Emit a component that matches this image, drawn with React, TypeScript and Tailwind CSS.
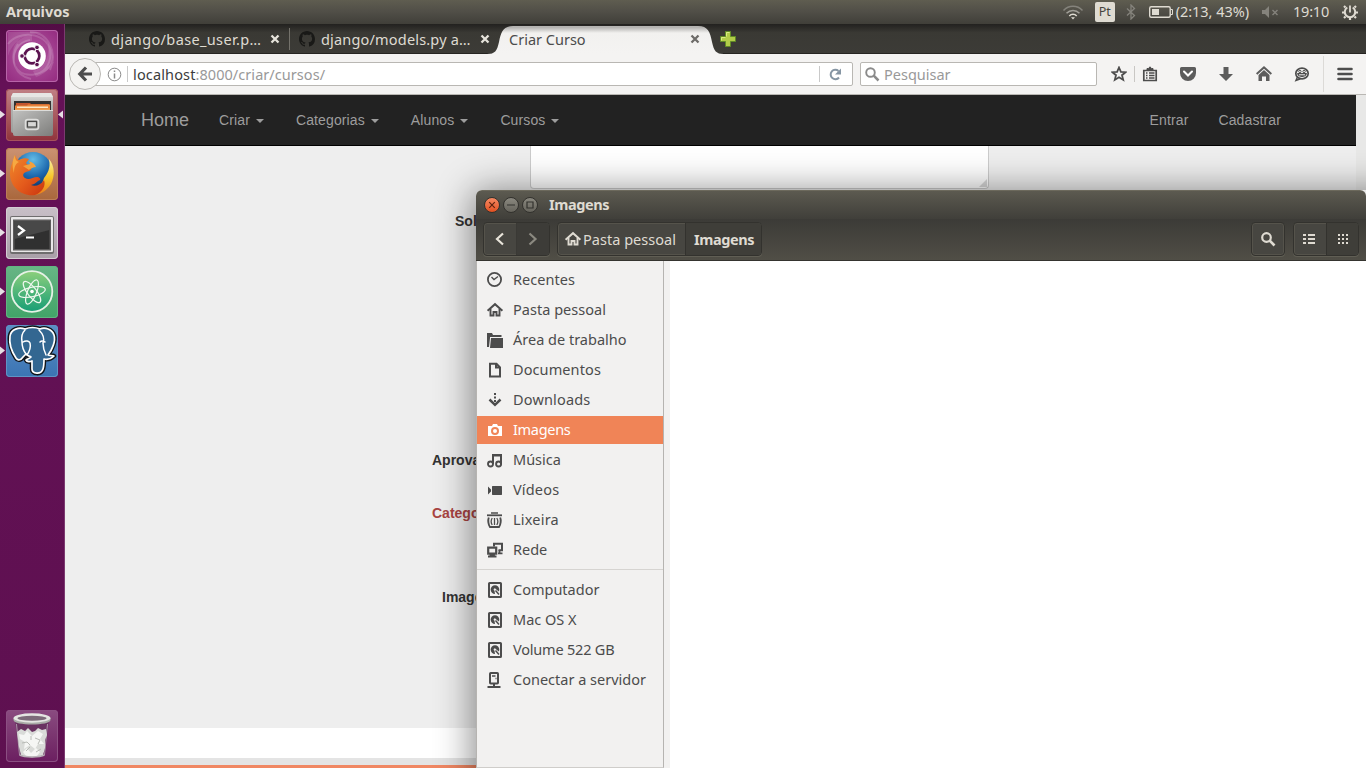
import React from "react";

/* ---------- Launcher tiles ---------- */

function Tile({ bg, running, active, children }: { bg: string; running?: boolean; active?: boolean; children: React.ReactNode }) {
  return (
    <div className="relative flex h-[52px] w-full justify-center">
      {running && (
        <svg className="absolute top-[19px] left-0" width="6" height="12">
          <path d="M0 2.500 5 6.500 0 10.500z" fill="#e6dfe4" />
        </svg>
      )}
      {active && (
        <svg className="absolute top-[19px] right-0" width="6" height="12">
          <path d="M5 2.500 0 6.500 5 10.500z" fill="#e6dfe4" />
        </svg>
      )}
      <div className={`h-[52px] w-[52px] overflow-hidden rounded-[4px] ${bg}`}>
        <svg width="52" height="52" viewBox="0 0 52 52">{children}</svg>
      </div>
    </div>
  );
}

function UbuntuLogo() {
  return (
    <>
      <path d="M2 14C12 0 40 2 44 20c2 12-4 21-13 24M47 32C40 46 16 50 9 36 4 24 12 12 24 10M24 2c18 0 28 20 20 38M25 49C10 46 2 30 12 14" fill="none" stroke="#fff" strokeOpacity=".16" strokeWidth="2" />
      <path d="M26 5C7 6 3 24 9 37 7 20 14 11 26 11zM30 47c17-5 21-22 12-34 2 15-4 25-15 28zM2 2h34C18 4 6 12 2 26z" fill="#fff" opacity=".12" />
      <circle cx="26" cy="26" r="13.800" fill="#fff" />
      <circle cx="26" cy="26" r="7.300" fill="none" stroke="#5b1350" strokeWidth="2.800" />
      <path d="M26 26 14 26M26 26l6.500-11M26 26l6.500 11" stroke="#fff" strokeWidth="1.200" />
      <circle cx="26" cy="26" r="5.500" fill="#fff" />
      {[[16, 26], [31, 17.4], [31, 34.6]].map(([x, y]) => (
        <circle key={y} cx={x} cy={y} r="2.300" fill="#5b1350" stroke="#fff" strokeWidth=".9" />
      ))}
    </>
  );
}

function FilesLogo() {
  return (
    <>
      <defs>
        <linearGradient id="cab" x1="0" y1="0" x2="1" y2="1">
          <stop offset="0" stopColor="#c2c2c0" />
          <stop offset="1" stopColor="#7d7d7b" />
        </linearGradient>
        <linearGradient id="cabTop" x1="0" y1="0" x2="0" y2="1">
          <stop offset="0" stopColor="#e4e4e2" />
          <stop offset=".3" stopColor="#b5b5b3" />
          <stop offset="1" stopColor="#9d9d9b" />
        </linearGradient>
      </defs>
      <path d="M7 4h38l2 4v34a2 2 0 0 1-2 2H7a2 2 0 0 1-2-2V8z" fill="url(#cabTop)" />
      <path d="M7 4h38l2 4H5z" fill="#e6e6e4" />
      <rect x="8" y="12" width="37" height="10" fill="#33312f" />
      <path d="M10 14h14l1 1h18v7H10z" fill="#c4562f" />
      <path d="M9 16.500h12l1-1h22V22H9z" fill="#e8853a" />
      <rect x="11" y="17.500" width="31" height="1.500" fill="#fde9c4" />
      <path d="M9 19.500h35v2H9z" fill="#f0a050" />
      <path d="M7 21h40v24a2 2 0 0 1-2 2H9a2 2 0 0 1-2-2z" fill="url(#cab)" />
      <path d="M7 21.500h40" stroke="#dcdcda" />
      <rect x="19.500" y="30.500" width="13" height="10" rx="2.500" fill="#a5a5a3" stroke="#dededc" strokeWidth="1.600" />
      <rect x="21.500" y="32.500" width="9" height="5.500" fill="#d8d8d6" stroke="#4b4b49" strokeWidth="1.200" />
    </>
  );
}

function FirefoxLogo() {
  return (
    <>
      <defs>
        <radialGradient id="globe" cx=".5" cy=".2" r=".8">
          <stop offset="0" stopColor="#62bbe6" />
          <stop offset=".55" stopColor="#1c68ad" />
          <stop offset="1" stopColor="#0b2c5f" />
        </radialGradient>
        <linearGradient id="fox" x1="0" y1="0" x2="1" y2="1">
          <stop offset="0" stopColor="#f08a2c" />
          <stop offset=".55" stopColor="#e45b1c" />
          <stop offset="1" stopColor="#c9350f" />
        </linearGradient>
        <linearGradient id="tail" x1="0" y1="0" x2="0" y2="1">
          <stop offset="0" stopColor="#f8efa0" />
          <stop offset=".5" stopColor="#f7c629" />
          <stop offset="1" stopColor="#ea7a1b" />
        </linearGradient>
      </defs>
      <circle cx="27" cy="23" r="19" fill="url(#globe)" />
      <path d="M43 11c6 7 6 17 2 25-5 8-12 11-19 11 6-4 10-10 12-17 3-4 7-9 5-19z" fill="url(#tail)" />
      <path d="M9 7c1 3 2 4 4 5 4-2 7-2 10-1l-3 4 5 5c1 2-1 3-5 4-3 1-4 4-1 6 4 3 8-1 12-1 2 0 4 2 3 3-3 1-4 4-9 5 4 2 10 0 13-5 2 5-1 12-9 15C16 49 4 39 4 26c0-8 3-12 5-19z" fill="url(#fox)" />
      <path d="M9 7c0 4 1 6 4 7-4 2-5 6-5 11-2-7-2-12 1-18z" fill="#f7a941" />
      <path d="M17 18l7-2-1-3c3 1 6 3 7 6-3 0-6 2-7 3z" fill="#f3a03d" />
    </>
  );
}

function TerminalLogo() {
  return (
    <>
      <rect x="4" y="9" width="44" height="38" rx="2" fill="#6f6d6e" />
      <rect x="5" y="10" width="42" height="35" rx="1" fill="#e9e7e8" />
      <rect x="7" y="12.500" width="38" height="31" fill="#5c5b5b" />
      <rect x="8.500" y="14" width="35" height="28" fill="#303030" />
      <path d="M8.500 14h35v9l-35 9z" fill="#484848" />
      <path d="M12 19l6 4.500-6 4.500" fill="none" stroke="#fff" strokeWidth="2.200" />
      <path d="M20 30.500h8" stroke="#fff" strokeWidth="2" />
    </>
  );
}

function AtomLogo() {
  return (
    <>
      <defs>
        <linearGradient id="atom" x1="0" y1="0" x2="0" y2="1">
          <stop offset="0" stopColor="#8ccf7c" />
          <stop offset="1" stopColor="#179e76" />
        </linearGradient>
      </defs>
      <circle cx="26" cy="25.500" r="20.300" fill="url(#atom)" stroke="#e6f2e6" strokeWidth="1.800" />
      <g fill="none" stroke="#eef7ee" strokeWidth="1.200">
        <ellipse cx="26" cy="26" rx="13.500" ry="4.800" transform="rotate(-12 26 26)" />
        <ellipse cx="26" cy="26" rx="13" ry="4.500" transform="rotate(52 26 26)" />
        <ellipse cx="26" cy="26" rx="13" ry="4.500" transform="rotate(-68 26 26)" />
      </g>
      <circle cx="26" cy="25.500" r="1.800" fill="#fff" />
    </>
  );
}

function PostgresLogo() {
  const shape =
    "M19 4c-6-2-14 0-15 7-1 7 2 16 6 22 2 3 5 2 7-1l3-3c2 2 3 2 5 3-2 2-4 2-5 3 1 2 4 2 6 1v8c0 5 9 6 11 0 1-3 1-7 1-10 4 1 8-1 10-3-1-1-5 0-6-1 4-5 8-14 6-20-2-6-9-8-14-6-5-2-10-2-15 0z";
  return (
    <>
      <path d={shape} fill="#336791" stroke="#101418" strokeWidth="4.500" strokeLinejoin="round" />
      <path d={shape} fill="#336791" stroke="#fff" strokeWidth="1.700" strokeLinejoin="round" />
      <path d="M19 5c-3 3-4 7-3 12 0 5 1 8 4 12M33 5c4 4 6 8 4 13 0 5 1 8 3 12M17 17c3-2 6-1 7 1 1 4-1 9-3 12M34 17c2-2 3-1 5 0" fill="none" stroke="#fff" strokeWidth="1.500" strokeLinecap="round" />
    </>
  );
}

function TrashLogo() {
  return (
    <>
      <path d="M9 10h34l-4 35c-3 3-23 3-26 0z" fill="#5f2f58" opacity=".7" />
      <path d="M10.500 14l3 31M41.500 14l-3 31" stroke="#cbbfca" strokeWidth="1" opacity=".7" />
      <path d="M11 22l4-3 4 2 3-3 4 4 3-1 3-3 4 2 4-1 1 6-2 5v8l-2 7c-5 3-17 3-22 0l-2-8-1-8z" fill="#d9dbd8" />
      <path d="M13 24l5 1 3-4 5 5 6-5 5 3-3 5 4 5-6 0-3 5-5-4-6 4 1-7-5-3zM17 42l4-4 4 5 5-5 4 4-3 4H20z" fill="#f5f6f4" />
      <path d="M16 33l5-1 3 3M29 28l5 2-2 4M20 41l4-4M30 42l5-3M25 26v4" stroke="#b8bbb6" fill="none" />
      <path d="M13.500 45c5 2.500 20 2.500 25 0" stroke="#b9b3b8" strokeWidth="1.500" fill="none" />
      <path d="M7.500 8v2c0 6 37 6 37 0V8z" fill="#a9aca7" />
      <ellipse cx="26" cy="8" rx="18.500" ry="4.700" fill="#e4e6e2" />
      <ellipse cx="26" cy="8.200" rx="14.500" ry="2.500" fill="#7c6b79" />
    </>
  );
}

/* ---------- Top panel ---------- */

function TopPanel() {
  return (
    <header className="flex h-6 shrink-0 items-center bg-linear-to-b from-[#5f5d50] via-[#504e47] to-[#403f39] pr-[7px] pl-[6px] text-[14.5px] leading-[22px] text-[#dfdbd2]">
      <span className="h-6 flex-1 font-bold tracking-[-0.05px]">Arquivos</span>
      <svg width="22" height="16" viewBox="0 0 22 16" fill="none">
        <path d="M1.500 6.500a13 13 0 0 1 19 0" stroke="#85837c" strokeWidth="1.500" />
        <path d="M4.500 9.300a9 9 0 0 1 13 0" stroke="#a19f98" strokeWidth="1.500" />
        <path d="M7.300 12a5 5 0 0 1 7.400 0" stroke="#dfdbd2" strokeWidth="1.500" />
        <path d="M9 13.200h4l-2 2.300z" fill="#dfdbd2" />
      </svg>
      <span className="ml-[11px] h-5 w-5 rounded-[2px] bg-[#dfdbd2] text-center text-[12.5px] leading-5 text-[#45443e]">Pt</span>
      <svg className="ml-[10px]" width="12" height="16" viewBox="0 0 12 16" fill="none" stroke="#85837c" strokeWidth="1.300">
        <path d="M2 4.500 9.500 11.500 6 15V1l3.500 3.500L2 11.500" />
      </svg>
      <svg className="ml-[11px]" width="26" height="14" viewBox="0 0 26 14" fill="none">
        <rect x="1.700" y="1.700" width="20.500" height="10.500" rx="1.500" stroke="#dfdbd2" strokeWidth="1.400" />
        <rect x="4" y="4" width="7" height="6" fill="#dfdbd2" />
        <path d="M22.500 4.500h2v5h-2" stroke="#dfdbd2" />
      </svg>
      <span className="ml-[2px] h-6 tracking-[-0.05px]">(2:13, 43%)</span>
      <svg className="ml-[12px]" width="19" height="14" viewBox="0 0 19 14">
        <path d="M1 5h3l4-4v12L4 9H1z" fill="#85837c" />
        <path d="M11.500 5l5 5m0-5-5 5" stroke="#85837c" strokeWidth="1.400" />
      </svg>
      <span className="ml-[13px] h-6 tracking-[-0.2px]">19:10</span>
      <svg className="ml-[12px]" width="18" height="18" viewBox="0 0 18 18" fill="none" stroke="#dfdbd2">
        <path d="M6.300 4.500a5.200 5.200 0 1 0 5.400 0" strokeWidth="2" />
        <path d="M9 2.500v7" strokeWidth="1.800" />
        <path d="M1 9.500h3M14 9.500h3M9 14v3M4.500 4.500l-1.500-1.500M13.500 4.500l1.500-1.500M4.500 13.500 3 15M13.500 13.500 15 15" strokeWidth="2.200" />
      </svg>
    </header>
  );
}

/* ---------- Browser ---------- */

const octocat =
  "M8 0C3.580 0 0 3.580 0 8c0 3.540 2.290 6.530 5.470 7.590.4.070.550-.17.550-.380 0-.190-.010-.820-.010-1.490-2.010.370-2.530-.490-2.690-.940-.090-.230-.480-.940-.820-1.130-.280-.150-.680-.520-.010-.530.630-.010 1.080.580 1.230.820.720 1.210 1.870.870 2.330.660.070-.520.280-.870.510-1.070-1.780-.200-3.640-.890-3.640-3.950 0-.870.310-1.590.820-2.150-.080-.200-.360-1.020.080-2.120 0 0 .670-.210 2.200.820.640-.180 1.320-.270 2-.270s1.360.090 2 .270c1.530-1.040 2.200-.820 2.200-.820.440 1.100.160 1.920.080 2.120.510.560.820 1.270.820 2.150 0 3.070-1.870 3.750-3.650 3.950.290.250.540.730.540 1.480 0 1.070-.010 1.930-.010 2.200 0 .210.150.460.550.380A8.010 8.010 0 0 0 16 8c0-4.420-3.580-8-8-8z";

function CloseX({ color }: { color: string }) {
  return (
    <svg width="10" height="10" viewBox="0 0 10 10">
      <path d="M1.500 1.500l7 7m0-7-7 7" stroke={color} strokeWidth="2.300" />
    </svg>
  );
}

function TabStrip() {
  return (
    <div className="flex h-[30px] shrink-0 items-center border-b border-[#262522] bg-linear-to-b from-[#22211f] from-0% via-[#3a3934] via-30% to-[#3c3b37] pl-6 text-[14.5px] leading-[30px] text-[#dfdbd2]">
      <svg width="16" height="16" viewBox="0 0 16 16" fill="#191917"><path d={octocat} /></svg>
      <span className="ml-[6px] w-[159px] whitespace-nowrap tracking-[0.36px]">django/base_user.p…</span>
      <CloseX color="#e6e3db" />
      <span className="ml-[9px] h-[22px] w-px bg-[#74726b]" />
      <svg className="ml-[9px]" width="16" height="16" viewBox="0 0 16 16" fill="#191917"><path d={octocat} /></svg>
      <span className="ml-[6px] w-[159px] whitespace-nowrap tracking-[0.18px]">django/models.py a…</span>
      <CloseX color="#e6e3db" />
      <div className="relative -mb-px ml-[-3px] h-[30px] w-[238px]">
        <svg className="absolute inset-0" width="238" height="30" viewBox="0 0 238 30">
          <defs>
            <linearGradient id="tab" x1="0" y1="0" x2="0" y2="1">
              <stop offset="0.050" stopColor="#b5b4b2" />
              <stop offset=".25" stopColor="#f2f1ef" />
              <stop offset="1" stopColor="#f4f3f2" />
            </linearGradient>
          </defs>
          <path d="M0 30c8 0 10-3 12-12 2-10 4-16 14-16h185c10 0 12 6 14 16 2 9 4 12 12 12z" fill="url(#tab)" />
        </svg>
        <div className="relative flex h-[30px] items-center pr-[25px] pl-[22px] text-[#4c4c4c]">
          <span className="flex-1 leading-[30px]">Criar Curso</span>
          <CloseX color="#6d6b68" />
        </div>
      </div>
      <svg className="-ml-[6px]" width="18" height="18" viewBox="0 0 18 18">
        <path d="M6.500 1.500h5v5h5v5h-5v5h-5v-5h-5v-5h5z" fill="#b2cc49" stroke="#608a26" />
        <path d="M7.500 6.500v-4h3M2.500 10.500v-3h4" fill="none" stroke="#dbeb84" />
      </svg>
    </div>
  );
}

function Toolbar() {
  return (
    <div className="flex h-[41px] shrink-0 items-center border-b border-[#b9b7b3] bg-[#f4f3f2] pl-1 text-[14.5px]">
      <div className="z-10 flex h-8 w-8 items-center justify-center rounded-full border border-[#b9b7b3] bg-[#f4f3f1]">
        <svg width="16" height="16" viewBox="0 0 16 16" fill="none" stroke="#4d4d4d" strokeWidth="3.200">
          <path d="M9 1.500 2.800 8 9 14.500M3 8h12" />
        </svg>
      </div>
      <div className="-ml-[6px] flex h-6 w-[758px] items-center rounded-r-[2px] border border-[#b9b7b3] bg-white pl-[11px]">
        <svg width="15" height="15" viewBox="0 0 15 15" fill="none" stroke="#8a8a8a">
          <circle cx="7.500" cy="7.500" r="6.300" />
          <path d="M7.500 6.500v5M7.500 3.500v1.600" strokeWidth="1.500" />
        </svg>
        <span className="ml-[5px] h-4 w-px bg-[#c9c9c9]" />
        <span className="ml-[5px] flex-1 leading-[22px] tracking-[0.05px] text-[#999]">
          <span className="tracking-[0.14px] text-[#3c3c3c]">localhost</span>:8000/criar/cursos/
        </span>
        <span className="h-4 w-px bg-[#c9c9c9]" />
        <svg className="mr-[10px] ml-[9px]" width="13" height="13" viewBox="0 0 13 13" fill="none">
          <path d="M10 9.500A4.700 4.700 0 1 1 9.500 3" stroke="#8595a3" strokeWidth="2" />
          <path d="M12 .5v6H6z" fill="#8595a3" />
        </svg>
      </div>
      <div className="ml-[7px] flex h-6 w-[237px] items-center rounded-[2px] border border-[#b9b7b3] bg-white pl-1 text-[#999]">
        <svg width="15" height="15" viewBox="0 0 15 15" fill="none" stroke="#8a8a8a">
          <circle cx="5.500" cy="5.500" r="4.300" strokeWidth="1.900" />
          <path d="M8.700 8.700l4.800 4.800" strokeWidth="2.500" />
        </svg>
        <span className="ml-[4px] leading-[22px]">Pesquisar</span>
      </div>
      <svg className="ml-[14px]" width="16" height="16" viewBox="0 0 16 16" fill="none" stroke="#4d4d4d" strokeWidth="1.800">
        <path d="M8 1.500l1.900 4.300 4.700.4-3.600 3 1.200 4.700L8 11.300l-4.200 2.600L5 9.200l-3.600-3 4.700-.4z" />
      </svg>
      <span className="ml-[7px] h-4 w-px bg-[#c9c7c4]" />
      <svg className="ml-[7px]" width="16" height="16" viewBox="0 0 16 16" fill="none" stroke="#4d4d4d">
        <path d="M1.800 4.500h12.400v10H1.800z" strokeWidth="1.700" />
        <path d="M5 4V2.500h1.500L8 .8l1.500 1.700H11V4z" fill="#4d4d4d" />
        <path d="M4 7h1.500M4 9.500h1.500M4 12h1.500M7 7h5.500M7 9.500h5.500M7 12h5.500" strokeWidth="1.300" />
      </svg>
      <svg className="ml-[21px]" width="18" height="16" viewBox="0 0 18 16">
        <path d="M2.500 1h13A1.500 1.500 0 0 1 17 2.500V7A8 8 0 0 1 1 7V2.500A1.500 1.500 0 0 1 2.500 1z" fill="#5c5c5c" />
        <path d="M5 5.500l4 4 4-4" fill="none" stroke="#fff" strokeWidth="2" strokeLinecap="round" />
      </svg>
      <svg className="ml-[21px]" width="16" height="16" viewBox="0 0 16 16">
        <path d="M5.500 1h5v7H15l-7 7-7-7h4.500z" fill="#5c5c5c" />
      </svg>
      <svg className="ml-[22px]" width="16" height="16" viewBox="0 0 16 16">
        <path d="M8 0l8 7.300-1.300 1.400L8 2.700 1.300 8.700 0 7.300z" fill="#5c5c5c" />
        <path d="M2.500 9 8 4l5.500 5v6H10v-4.500H6V15H2.500z" fill="#5c5c5c" />
      </svg>
      <svg className="ml-[22px]" width="16" height="16" viewBox="0 0 16 16" fill="none" stroke="#4d4d4d">
        <ellipse cx="8" cy="7.500" rx="6.200" ry="5.300" strokeWidth="1.700" />
        <path d="M3.500 11 2 14.500l4.500-1.800" strokeWidth="1.500" />
        <path d="M3.500 7.500C4 11.500 12 11.500 12.500 7.500z" fill="#4d4d4d" />
        <circle cx="5.900" cy="5.500" r="1.200" />
        <circle cx="10.100" cy="5.500" r="1.200" />
        <path d="M5 8.800h6" stroke="#eee" />
      </svg>
      <span className="ml-[13px] h-9 w-px bg-[#dcdad7]" />
      <svg className="ml-[13px]" width="16" height="14" viewBox="0 0 16 14" stroke="#4d4d4d" strokeWidth="2.600" strokeLinecap="round">
        <path d="M1.500 2h13M1.500 7h13M1.500 12h13" />
      </svg>
    </div>
  );
}

function NavMenu({ label }: { label: string }) {
  return (
    <span className="flex items-center pr-[17px] pl-[15px] tracking-[0.12px]">
      {label}
      <span className="mt-[2px] ml-[6px] border-x-4 border-t-4 border-x-transparent border-t-[#9d9d9d]" />
    </span>
  );
}

function Browser() {
  return (
    <section className="flex min-w-0 flex-1 flex-col">
      <TabStrip />
      <Toolbar />
      <div className="flex min-h-0 flex-1">
        <div className="flex flex-1 flex-col font-['Liberation_Sans',sans-serif]">
          <nav className="flex h-[51px] shrink-0 border-b border-black bg-[#222] pr-[60px] pl-[61px] text-[14px] leading-[50px] text-[#9d9d9d]">
            <span className="px-[15px] text-[18px]">Home</span>
            <div className="flex flex-1">
              <NavMenu label="Criar" />
              <NavMenu label="Categorias" />
              <NavMenu label="Alunos" />
              <NavMenu label="Cursos" />
            </div>
            <span className="px-[15px] tracking-[0.12px]">Entrar</span>
            <span className="px-[15px] tracking-[0.12px]">Cadastrar</span>
          </nav>
          <main className="flex h-[582px] flex-col bg-[#eee] text-[14px] leading-5 font-bold text-[#333]">
            <div className="relative ml-[465px] h-[43px] w-[459px] rounded-b-[4px] border border-t-0 border-[#ccc] bg-white">
              <svg className="absolute right-px bottom-px" width="8" height="8" fill="#c9c9c9" opacity=".7"><path d="M0 8 8 0V8z" /></svg>
            </div>
            <div className="mt-[22px] pl-[390px]">Sol</div>
            <div className="mt-[219px] pl-[367px]">Aprova</div>
            <div className="mt-[33px] pl-[367px] text-[#a94442]">Catego</div>
            <div className="mt-[64px] pl-[377px]">Image</div>
          </main>
          <div className="h-[30px] shrink-0 bg-white" />
          <div className="h-[7px] shrink-0 bg-[#e4e4e4]" />
          <div className="h-[3px] shrink-0 bg-[#f08763]" />
        </div>
        <div className="w-[10px] shrink-0 bg-[#e8e8e7]" />
      </div>
    </section>
  );
}

/* ---------- File manager ---------- */

const icons: Record<string, React.ReactNode> = {
  clock: (
    <>
      <circle cx="7.500" cy="7.500" r="6.600" fill="none" strokeWidth="1.800" />
      <path d="M4.500 5 7 7.500 11 4.500" fill="none" strokeWidth="1.400" />
    </>
  ),
  home: (
    <>
      <path d="M.6 8.700 8 2.200l7.400 6.500" fill="none" strokeWidth="2" />
      <path d="M3.500 7v6.500h3V10h3v3.500h3V7" fill="none" strokeWidth="1.900" />
    </>
  ),
  folder: (
    <path d="M0 1h5l1 2h8.500v2H3v1l-1 9H0zM4 6h12v10H3z" fill="currentColor" stroke="none" />
  ),
  doc: <path d="M3 1.800h6.500L13 5.300v9.200H3zM9 2v3.500h3.500" fill="none" strokeWidth="2" />,
  download: (
    <>
      <path d="M8 1v9" strokeWidth="2" strokeDasharray="2 1.500" />
      <path d="M2.500 7.500 8 12.800 13.500 7.500" fill="none" strokeWidth="2.500" />
    </>
  ),
  camera: (
    <>
      <path d="M1 4h4l1-2h4l1 2h4v10H1z" fill="currentColor" stroke="none" />
      <circle cx="8" cy="9" r="3" fill="none" stroke="#f08457" strokeWidth="2" />
    </>
  ),
  music: (
    <>
      <path d="M6 12V3h8v9M6 3.500h8" fill="none" strokeWidth="2" />
      <circle cx="3.500" cy="12" r="2.500" fill="none" strokeWidth="1.900" />
      <circle cx="11.600" cy="12" r="2.500" fill="none" strokeWidth="1.900" />
    </>
  ),
  video: <path d="M5.500 4h9l.5.500v8l-.5.500h-9l-.5-.5v-8zM1 4.500l3 3v2l-3 3z" fill="currentColor" stroke="none" />,
  trash: (
    <>
      <path d="M4 1h7" strokeWidth="1.500" />
      <path d="M0 3.300h15" strokeWidth="1.800" />
      <path d="M1.800 5.500C.8 8 1.200 12.500 3 15h9c1.800-2.500 2.200-7 1.200-9.500" fill="none" strokeWidth="1.900" />
      <path d="M5.200 6C4 8 4 11 5.200 13M7.500 6v7M9.800 6c1.200 2 1.200 5 0 7" fill="none" strokeWidth="1.300" />
    </>
  ),
  network: (
    <>
      <path d="M7 4.500V1.800h8v6.500h-3.500" fill="none" strokeWidth="2" />
      <path d="M1.200 5.700h8v6h-8z" fill="none" strokeWidth="2.200" />
      <path d="M3.500 13h3.500v1H3.500zM1 14.500h8.500M12.500 8v3M11 11.300h4.500" strokeWidth="1.800" />
    </>
  ),
  disk: (
    <>
      <rect x="2" y="1" width="12" height="14" rx=".6" fill="none" strokeWidth="2" />
      <path d="M8 3.200a4.300 4.300 0 0 1 4.300 4.300c0 .8-.2 1.300-.5 1.900L9 7.200a1.200 1.200 0 1 0-1.500 1.500l.5 3.200A4.300 4.300 0 0 1 8 3.200z" fill="currentColor" stroke="none" />
      <path d="M8.500 8.500l3.500 4" strokeWidth="1.500" />
    </>
  ),
  server: (
    <>
      <rect x="3" y="1" width="8" height="10.500" rx=".8" fill="none" strokeWidth="2" />
      <path d="M5 4h3.500M8.500 6.500h1" strokeWidth="1.500" />
      <path d="M7 12v3M.5 15h13" strokeWidth="2" />
    </>
  ),
};

function SymIcon({ name }: { name: string }) {
  return (
    <svg width="16" height="16" viewBox="0 0 16 16" stroke="currentColor" className="shrink-0 overflow-visible">
      {icons[name]}
    </svg>
  );
}

const places = [
  { icon: "clock", label: "Recentes", track: "tracking-[0.04px]" },
  { icon: "home", label: "Pasta pessoal", track: "tracking-[0.03px]" },
  { icon: "folder", label: "Área de trabalho", track: "" },
  { icon: "doc", label: "Documentos", track: "tracking-[0.1px]" },
  { icon: "download", label: "Downloads", track: "tracking-[0.17px]" },
  { icon: "camera", label: "Imagens", track: "tracking-[-0.3px]", selected: true },
  { icon: "music", label: "Música", track: "" },
  { icon: "video", label: "Vídeos", track: "tracking-[0.17px]" },
  { icon: "trash", label: "Lixeira", track: "tracking-[0.2px]" },
  { icon: "network", label: "Rede", track: "" },
];

const devices = [
  { icon: "disk", label: "Computador", track: "" },
  { icon: "disk", label: "Mac OS X", track: "" },
  { icon: "disk", label: "Volume 522 GB", track: "tracking-[-0.2px]" },
  { icon: "server", label: "Conectar a servidor", track: "" },
];

function Place({ icon, label, track, selected }: { icon: string; label: string; track: string; selected?: boolean }) {
  return (
    <li className={`flex h-7 items-center gap-[10px] pl-[10px] whitespace-nowrap ${selected ? "bg-[#f08457] text-white" : "text-[#4c4c4c]"}`}>
      <SymIcon name={icon} />
      <span className={`h-7 leading-[26px] ${track}`}>{label}</span>
    </li>
  );
}

function WindowButton({ tone, ink, d }: { tone: string; ink: string; d: string }) {
  return (
    <span className={`flex h-4 w-4 items-center justify-center rounded-full border border-[#33322e] bg-linear-to-b ${tone}`}>
      <svg width="10" height="10" viewBox="0 0 10 10" fill="none" stroke={ink} strokeWidth="1.200"><path d={d} /></svg>
    </span>
  );
}

const groupBox = "flex rounded-[4px] border border-[#33322e] bg-[#474641] shadow-[inset_0_0_0_1px_#55534b,0_1px_0_#605e54]";

function FileManager() {
  return (
    <section className="absolute top-[190px] left-[476px] flex h-[578px] w-[890px] flex-col overflow-hidden rounded-t-[6px] bg-white text-[14.5px] text-[#dfdbd2]">
      <div className="flex h-[29px] shrink-0 items-center gap-[3px] border-t border-[#6c695c] bg-linear-to-b from-[#5c5a50] to-[#403f3a] pb-px pl-[8px]">
        <WindowButton tone="from-[#f58962] to-[#e2501e]" ink="#5e2310" d="M2.200 2.200l5.600 5.600m0-5.600-5.600 5.600" />
        <WindowButton tone="from-[#8a887f] to-[#66645c]" ink="#33322e" d="M1 5h8" />
        <WindowButton tone="from-[#8a887f] to-[#66645c]" ink="#33322e" d="M2 2h6v6H2z" />
        <span className="ml-[8px] h-7 leading-[27px] font-bold tracking-[-0.4px]">Imagens</span>
      </div>
      <div className="flex h-[42px] shrink-0 items-center border-b border-[#35342f] bg-linear-to-b from-[#3c3b37] to-[#504e46] pr-[7px] pb-px pl-[7px]">
        <div className={`${groupBox} h-[34px] w-[67px]`}>
          <span className="flex w-8 items-center justify-center">
            <svg width="10" height="14" viewBox="0 0 10 14" fill="none" stroke="#e8e4da" strokeWidth="2.200"><path d="M8 1.500 2 7l6 5.500" /></svg>
          </span>
          <span className="flex flex-1 items-center justify-center rounded-r-[3px] border-l border-[#3a3935] bg-[#3d3c38] pr-px">
            <svg width="10" height="14" viewBox="0 0 10 14" fill="none" stroke="#8b8980" strokeWidth="2.200"><path d="M1.500 1.500 7.500 7l-6 5.500" /></svg>
          </span>
        </div>
        <div className={`${groupBox} ml-[7px] h-[34px] w-[205px] leading-[33px]`}>
          <span className="flex w-[127px] items-center pl-[7px] whitespace-nowrap">
            <SymIcon name="home" />
            <span className="ml-[2px] tracking-[0.03px]">Pasta pessoal</span>
          </span>
          <span className="flex-1 rounded-r-[3px] border-l border-[#33322e] bg-[#3f3e39] pl-2 font-bold tracking-[-0.4px]">Imagens</span>
        </div>
        <span className="flex-1" />
        <span className={`${groupBox} h-[34px] w-[34px] items-center justify-center`}>
          <svg width="16" height="16" viewBox="0 0 16 16" fill="none" stroke="#dfdbd2">
            <circle cx="6.500" cy="6.500" r="4.300" strokeWidth="2.200" />
            <path d="M9.500 9.500l5 5" strokeWidth="2.600" />
          </svg>
        </span>
        <div className={`${groupBox} ml-[8px] h-[34px] w-[66px]`}>
          <span className="flex w-8 items-center justify-center pr-[2px]">
            <svg width="12" height="10" viewBox="0 0 12 10" stroke="#dfdbd2" strokeWidth="2"><path d="M0 1h3M0 5h3M0 9h3M5 1h7M5 5h7M5 9h7" /></svg>
          </span>
          <span className="flex flex-1 items-center justify-center rounded-r-[3px] border-l border-[#33322e] bg-[#3f3e39]">
            <svg width="10" height="10" viewBox="0 0 10 10" stroke="#dfdbd2" strokeWidth="2"><path d="M0 1h10M0 5h10M0 9h10" strokeDasharray="2 2" /></svg>
          </span>
        </div>
      </div>
      <div className="flex min-h-0 flex-1">
        <aside className="w-[188px] shrink-0 border border-t-0 border-[#b6b4b1] border-b-[#cfcdca] bg-[#f2f1f0] pt-[5px]">
          <ul className="flex flex-col gap-[2px]">
            {places.map((p) => <Place key={p.label} {...p} />)}
          </ul>
          <hr className="mt-[5px] mb-[6px] border-t border-[#d6d4d1]" />
          <ul className="flex flex-col gap-[2px]">
            {devices.map((p) => <Place key={p.label} {...p} />)}
          </ul>
        </aside>
        <div className="w-[6px] shrink-0 bg-[#f2f1f0]" />
        <div className="flex-1 bg-white" />
      </div>
    </section>
  );
}

export default function App() {
  return (
    <div className="relative flex h-[768px] w-[1366px] flex-col overflow-hidden bg-[#eee] font-['Noto_Sans',sans-serif]">
      <TopPanel />
      <div className="flex min-h-0 flex-1">
        <aside className="flex w-[65px] shrink-0 flex-col gap-[7px] border-r border-[#7c3a70] bg-linear-to-b from-[#530c45] via-[#651157] via-8% to-[#5e1050] pt-[6px] pb-[6px]">
          <Tile bg="bg-radial from-[#b45aa4] to-[#93297f] shadow-[inset_0_0_0_1px_#b764a8]"><UbuntuLogo /></Tile>
          <Tile bg="bg-linear-to-b from-[#c08086] to-[#90333b] shadow-[inset_0_0_0_1px_#a6525c]" running active><FilesLogo /></Tile>
          <Tile bg="bg-linear-to-b from-[#cb9272] to-[#a9673c] shadow-[inset_0_0_0_1px_#bc7d58]" running><FirefoxLogo /></Tile>
          <Tile bg="bg-linear-to-b from-[#c9c0c8] to-[#a99fa8] shadow-[inset_0_0_0_1px_#d4ccd3]" running><TerminalLogo /></Tile>
          <Tile bg="bg-linear-to-b from-[#67b585] to-[#41a468] shadow-[inset_0_0_0_1px_#62b482]" running><AtomLogo /></Tile>
          <Tile bg="bg-linear-to-b from-[#5b8fc5] to-[#3b74b3] shadow-[inset_0_0_0_1px_#5f93c5]" running><PostgresLogo /></Tile>
          <div className="flex-1" />
          <Tile bg="bg-linear-to-b from-[#8a4b80] to-[#6b1e60] shadow-[inset_0_0_0_1px_#8b4f82]"><TrashLogo /></Tile>
        </aside>
        <Browser />
      </div>
      <div className="absolute top-[146px] right-0 bottom-0 left-[65px] overflow-hidden">
        <div className="absolute top-[44px] left-[411px] h-[700px] w-[980px] rounded-[6px] shadow-[0_4px_36px_4px_rgba(0,0,0,0.45)]" />
      </div>
      <FileManager />
    </div>
  );
}
